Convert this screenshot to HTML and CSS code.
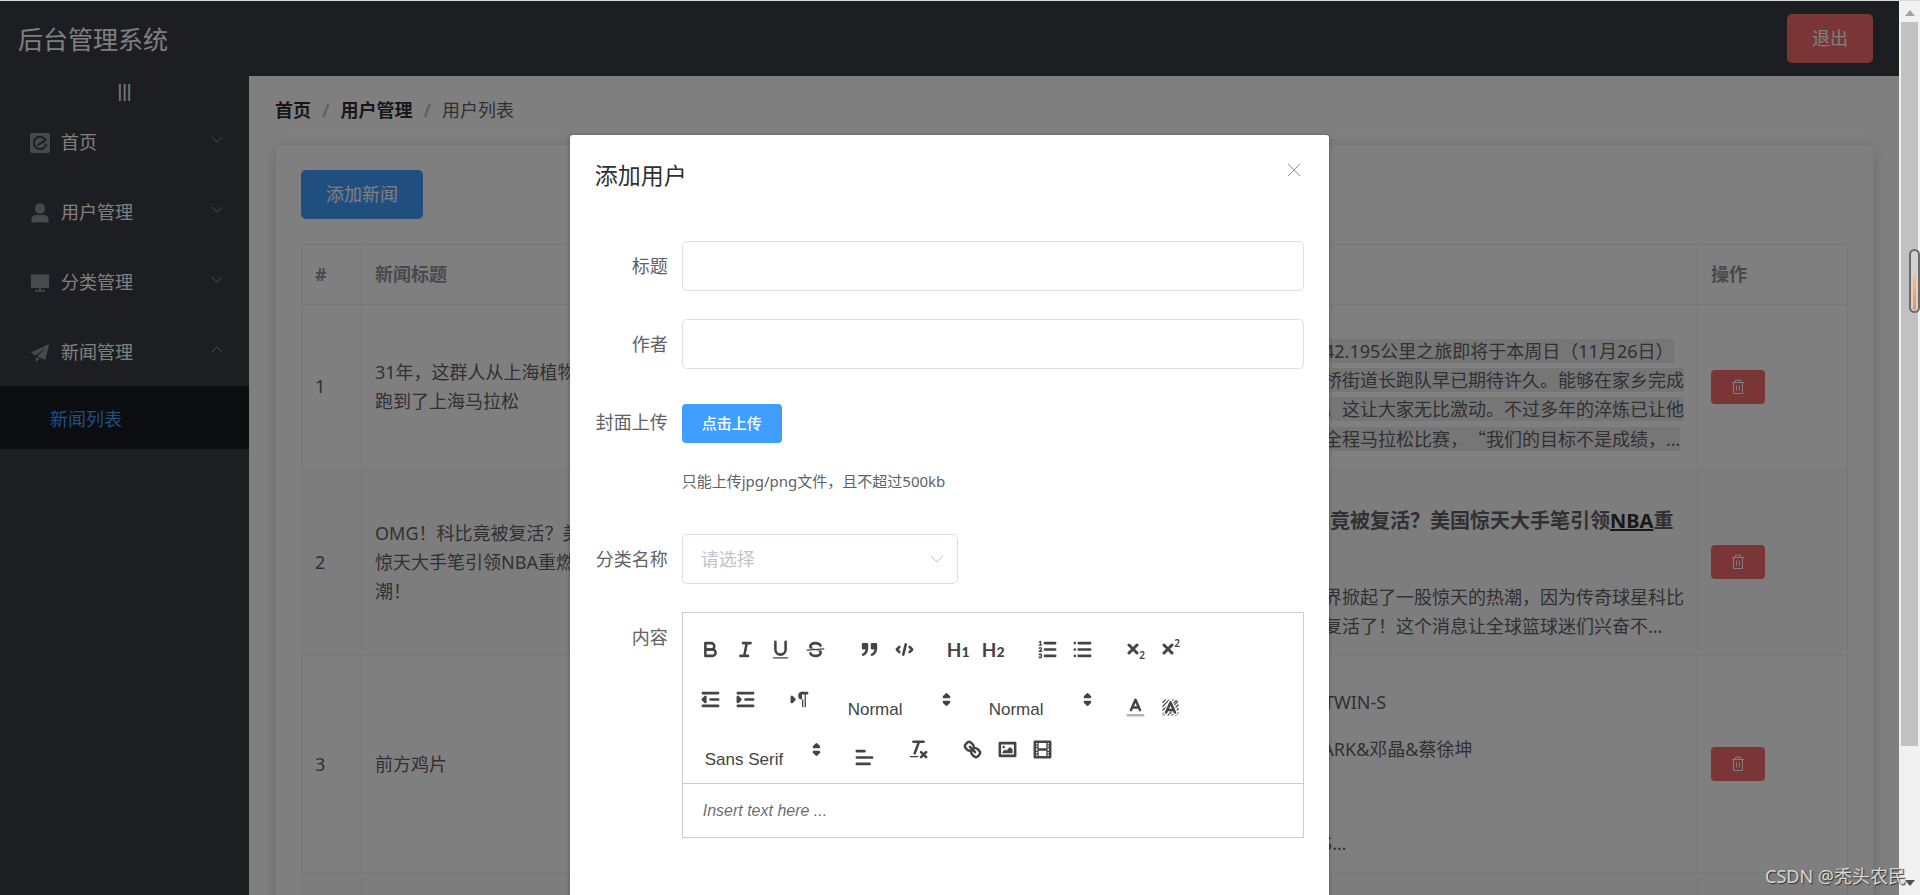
FILE: index.html
```html
<!DOCTYPE html>
<html lang="zh-CN">
<head>
<meta charset="utf-8">
<title>后台管理系统</title>
<link rel="stylesheet" href="styles.css">
</head>
<body>
<div class="window">
  <div class="app">
    <header class="header">
      <div class="brand">后台管理系统</div>
      <button class="btn btn-danger" type="button">退出</button>
    </header>
    <div class="body">
      <nav class="aside">
        <button class="toggle" type="button">|||</button>
        <ul class="menu">
          <li><a class="menu-item" href="#">
            <svg class="menu-icon" viewBox="0 0 20 20"><rect x="0" y="0" width="20" height="20" rx="2" fill="currentColor"/><path d="M14.5 14.2A6.2 6.2 0 1 1 15.6 7.2L8 12" fill="none" stroke="#393c44" stroke-width="2" stroke-linejoin="round" stroke-linecap="round"/><path d="M15.4 11.2l1 1.6" stroke="#393c44" stroke-width="2" stroke-linecap="round"/></svg>
            <span>首页</span>
            <svg class="chev" viewBox="0 0 12 7"><path d="M1 1l5 5 5-5"/></svg></a></li>
          <li><a class="menu-item" href="#">
            <svg class="menu-icon" viewBox="0 0 20 20"><ellipse cx="10" cy="5.5" rx="5" ry="5.3" fill="currentColor"/><path d="M1.500 19.500v-3a4.500 4.500 0 0 1 4.500-4.500h8a4.500 4.500 0 0 1 4.500 4.500v3z" fill="currentColor"/></svg>
            <span>用户管理</span>
            <svg class="chev" viewBox="0 0 12 7"><path d="M1 1l5 5 5-5"/></svg></a></li>
          <li><a class="menu-item" href="#">
            <svg class="menu-icon" viewBox="0 0 20 20"><path d="M1 1.500h18v13.500H1zM9 15h2v2.200h4v1.600H5v-1.600h4z" fill="currentColor"/></svg>
            <span>分类管理</span>
            <svg class="chev" viewBox="0 0 12 7"><path d="M1 1l5 5 5-5"/></svg></a></li>
          <li><a class="menu-item" href="#">
            <svg class="menu-icon" viewBox="0 0 20 20"><path d="M19 1L.8 9.600l4.600 2.800L15.500 5 7.200 13.600l8.300 3.400zM6 14.300v5l3.300-3.600z" fill="currentColor"/></svg>
            <span>新闻管理</span>
            <svg class="chev" viewBox="0 0 12 7"><path d="M1 6l5-5 5 5"/></svg></a>
            <a class="submenu-item" href="#">新闻列表</a></li>
        </ul>
      </nav>
      <main class="main">
        <div class="crumbs"><a href="#">首页</a><i>/</i><a href="#">用户管理</a><i>/</i><span>用户列表</span></div>
        <section class="card">
          <button class="btn btn-primary" type="button">添加新闻</button>
          <table class="table">
            <colgroup><col class="c-index"><col class="c-title"><col><col class="c-content"><col class="c-action"></colgroup>
            <thead><tr><th>#</th><th>新闻标题</th><th></th><th></th><th>操作</th></tr></thead>
            <tbody>
              <tr>
                <td>1</td>
                <td class="nowrap">31年，这群人从上海植物园<br>跑到了上海马拉松</td>
                <td></td>
                <td class="nowrap"><p class="para"><span class="mark">上马的42.195公里之旅即将于本周日（11月26日）</span><br><span class="mark">徐汇长桥街道长跑队早已期待许久。能够在家乡完成</span><br><span class="mark">拉松赛，这让大家无比激动。不过多年的淬炼已让他</span><br><span class="mark">们坚持全程马拉松比赛，<span class="cjk">“</span>我们的目标不是成绩，…</span></p></td>
                <td><button class="btn-del" type="button" aria-label="删除"><svg viewBox="0 0 14 16"><path d="M1 3.500h12M4.500 3V1.200h5V3M2.500 3.500v11h9v-11M5.500 6.500v5M8.500 6.500v5"/></svg></button></td>
              </tr>
              <tr class="striped">
                <td>2</td>
                <td class="nowrap">OMG！科比竟被复活？美国<br>惊天大手笔引领NBA重燃热<br>潮！</td>
                <td></td>
                <td class="nowrap"><h3 class="lead">！科比竟被复活？美国惊天大手笔引领<a href="#">NBA</a>重</h3><p class="flush">在篮球界掀起了一股惊天的热潮，因为传奇球星科比<br>竟然被复活了！这个消息让全球篮球迷们兴奋不…</p></td>
                <td><button class="btn-del" type="button" aria-label="删除"><svg viewBox="0 0 14 16"><path d="M1 3.500h12M4.500 3V1.200h5V3M2.500 3.500v11h9v-11M5.500 6.500v5M8.500 6.500v5"/></svg></button></td>
              </tr>
              <tr>
                <td>3</td>
                <td class="nowrap">前方鸡片</td>
                <td></td>
                <td class="nowrap"><p class="para">作曲：TWIN-S</p><p class="para">词：MARK&amp;邓晶&amp;蔡徐坤</p><p class="para">&nbsp;</p><p class="para">TWIN-S…</p></td>
                <td><button class="btn-del" type="button" aria-label="删除"><svg viewBox="0 0 14 16"><path d="M1 3.500h12M4.500 3V1.200h5V3M2.500 3.500v11h9v-11M5.500 6.500v5M8.500 6.500v5"/></svg></button></td>
              </tr>
              <tr class="striped"><td>&nbsp;</td><td></td><td></td><td></td><td></td></tr>
            </tbody>
          </table>
        </section>
      </main>
    </div>
    <div class="overlay">
      <div class="dialog" role="dialog" aria-labelledby="dlg-title">
        <div class="dialog-head">
          <h2 id="dlg-title">添加用户</h2>
          <button class="close" type="button" aria-label="关闭"><svg viewBox="0 0 14 14"><path d="M1 1l12 12M13 1L1 13"/></svg></button>
        </div>
        <form class="form">
          <div class="row"><label for="f-title">标题</label><input class="input" id="f-title" type="text"></div>
          <div class="row"><label for="f-author">作者</label><input class="input" id="f-author" type="text"></div>
          <div class="row"><label for="f-upload">封面上传</label>
            <div class="upload"><button class="btn-small" id="f-upload" type="button">点击上传</button><p>只能上传jpg/png文件，且不超过500kb</p></div></div>
          <div class="row"><label for="f-cat">分类名称</label>
            <div class="select"><select id="f-cat"><option>请选择</option></select><svg viewBox="0 0 14 8"><path d="M1 1l6 6 6-6"/></svg></div></div>
          <div class="row"><label for="f-body">内容</label>
            <div class="editor">
              <div class="toolbar">
                <span class="group">
                  <button type="button" aria-label="粗体"><svg viewBox="0 0 18 18"><path d="M5,4H9.500A2.500,2.500,0,0,1,12,6.500A2.500,2.500,0,0,1,9.500,9H5V4Z"/><path d="M5,9h5.500A2.500,2.500,0,0,1,13,11.500A2.500,2.500,0,0,1,10.500,14H5V9Z"/></svg></button>
                  <button type="button" aria-label="斜体"><svg viewBox="0 0 18 18"><path d="M7 4H13M5 14H11M8 14L10 4"/></svg></button>
                  <button type="button" aria-label="下划线"><svg viewBox="0 0 18 18"><path d="M5,3V9a4,4,0,0,0,8,0V3"/><rect class="fill" x="3" y="15" width="12" height="1" rx=".5"/></svg></button>
                  <button type="button" aria-label="删除线"><svg viewBox="0 0 18 18"><path class="thin" d="M15.500 8.500L2.500 9.500"/><path class="fill" d="M9.007,8C6.542,7.791,6,7.519,6,6.500,6,5.792,7.283,5,9,5c1.571,0,2.765.679,2.969,1.309a1,1,0,0,0,1.900-.617C13.356,4.106,11.354,3,9,3,6.200,3,4,4.538,4,6.500a3.200,3.200,0,0,0,.5,1.843Z"/><path class="fill" d="M8.984,10C11.457,10.208,12,10.479,12,11.500c0,0.708-1.283,1.500-3,1.500-1.571,0-2.765-.679-2.969-1.309a1,1,0,1,0-1.900.617C4.644,13.894,6.646,15,9,15c2.800,0,5-1.538,5-3.500a3.200,3.200,0,0,0-.5-1.843Z"/></svg></button>
                </span>
                <span class="group">
                  <button type="button" aria-label="引用"><svg viewBox="0 0 18 18"><g class="both"><rect x="4" y="5" width="3" height="3"/><rect x="11" y="5" width="3" height="3"/><path d="M7,8c0,4.031-3,5-3,5"/><path d="M14,8c0,4.031-3,5-3,5"/></g></svg></button>
                  <button type="button" aria-label="代码"><svg viewBox="0 0 18 18"><path d="M5 7L3 9L5 11M13 7L15 9L13 11M10 5L8 13"/></svg></button>
                </span>
                <span class="group">
                  <button class="heading" type="button">H<small>1</small></button>
                  <button class="heading" type="button">H<small>2</small></button>
                </span>
                <span class="group">
                  <button type="button" aria-label="有序列表"><svg viewBox="0 0 18 18"><path d="M7 4H15M7 9H15M7 14H15"/><path class="thin" d="M2.500 5.500H4.500M2.600 3.100L3.500 2.600V5.500M4.500,10.500h-2c0-.234,1.850-1.076,1.850-2.234A0.959,0.959,0,0,0,2.500,8.156M2.500,14.846a0.959,0.959,0,0,0,1.850-.109A0.700,0.700,0,0,0,3.750,14a0.688,0.688,0,0,0,.6-0.736,0.959,0.959,0,0,0-1.850-.109"/></svg></button>
                  <button type="button" aria-label="无序列表"><svg viewBox="0 0 18 18"><path d="M6 4H15M6 9H15M6 14H15M3 4V4M3 9V9M3 14V14"/></svg></button>
                </span>
                <span class="group">
                  <button class="script" type="button"><svg viewBox="0 0 12 12"><path d="M2 2L10 10M10 2L2 10"/></svg><small class="low">2</small></button>
                  <button class="script" type="button"><svg viewBox="0 0 12 12"><path d="M2 2L10 10M10 2L2 10"/></svg><small class="high">2</small></button>
                </span>
                <span class="group">
                  <button type="button" aria-label="减少缩进"><svg viewBox="0 0 18 18"><path d="M3 14H15M3 4H15M9 9H15"/><path class="both" d="M5 7V11L3 9Z"/></svg></button>
                  <button type="button" aria-label="增加缩进"><svg viewBox="0 0 18 18"><path d="M3 14H15M3 4H15M9 9H15"/><path class="both" d="M3 7V11L5 9Z"/></svg></button>
                </span>
                <span class="group">
                  <button type="button" aria-label="文字方向"><svg viewBox="0 0 18 18"><path class="both" d="M3 11L5 9L3 7Z"/><path d="M15 4H11"/><path class="fill" d="M11,3a3,3,0,0,0,0,6h1V3H11ZM11 4h1v11h-1zM13 4h1v11h-1z"/></svg></button>
                </span>
                <span class="group picker"><select aria-label="字号"><option>Normal</option></select><svg viewBox="0 0 18 18"><path class="both" d="M7 11L9 13L11 11ZM7 7L9 5L11 7Z"/></svg></span>
                <span class="group picker"><select aria-label="标题"><option>Normal</option></select><svg viewBox="0 0 18 18"><path class="both" d="M7 11L9 13L11 11ZM7 7L9 5L11 7Z"/></svg></span>
                <span class="group lower">
                  <button type="button" aria-label="文字颜色"><svg viewBox="0 0 18 18"><path opacity=".4" d="M3 15H15"/><path d="M5.500 11L9 3L12.500 11M11.600 9H6.400"/></svg></button>
                  <button type="button" aria-label="背景颜色"><svg viewBox="0 0 18 18"><path class="thin" stroke-dasharray="2 .6" d="M3 5L5 3M3 8L8 3M3 11L11 3M3 14L14 3M4 15L15 4M7 15L15 7M10 15L15 10M13 15L15 13"/><path class="halo" d="M5.500 13L9 5L12.500 13"/><path d="M5.500 13L9 5L12.500 13M11.600 11H6.400"/></svg></button>
                </span>
                <span class="group picker wide"><select aria-label="字体"><option>Sans Serif</option></select><svg viewBox="0 0 18 18"><path class="both" d="M7 11L9 13L11 11ZM7 7L9 5L11 7Z"/></svg></span>
                <span class="group lower">
                  <button type="button" aria-label="对齐"><svg viewBox="0 0 18 18"><path d="M3 9H15M3 14H13M3 4H9"/></svg></button>
                </span>
                <span class="group">
                  <button type="button" aria-label="清除格式"><svg viewBox="0 0 18 18"><path d="M5 3H13M6 12L9.350 3M11 11L15 15M15 11L11 15"/><rect class="fill" x="2" y="14" width="7" height="1" rx=".5"/></svg></button>
                </span>
                <span class="group">
                  <button type="button" aria-label="链接"><svg viewBox="0 0 18 18"><path d="M7 7L11 11M8.900,4.577a3.476,3.476,0,0,1,.36,4.679A3.476,3.476,0,0,1,4.577,8.900C3.185,7.500,2.035,6.400,4.217,4.217S7.500,3.185,8.900,4.577ZM13.423,9.100a3.476,3.476,0,0,0-4.679-.36,3.476,3.476,0,0,0,.36,4.679c1.392,1.392,2.500,2.542,4.679.36S14.815,10.500,13.423,9.100Z"/></svg></button>
                  <button type="button" aria-label="图片"><svg viewBox="0 0 18 18"><rect x="3" y="4" width="12" height="10"/><circle class="fill" cx="6" cy="7" r="1"/><path class="fill" d="M5 12V11L7 9L8 10L11 7L13 9V12Z"/></svg></button>
                  <button type="button" aria-label="视频"><svg viewBox="0 0 18 18"><rect x="3" y="3" width="12" height="12"/><path class="fill" d="M5 3h1v12h-1zM12 3h1v12h-1zM5 8h8v2h-8zM3 5h3v1h-3zM3 7h3v1h-3zM3 10h3v1h-3zM3 12h3v1h-3zM12 5h3v1h-3zM12 7h3v1h-3zM12 10h3v1h-3zM12 12h3v1h-3z"/></svg></button>
                </span>
              </div>
              <textarea id="f-body" rows="1" placeholder="Insert text here ..."></textarea>
            </div></div>
        </form>
      </div>
    </div>
  </div>
  <div class="scrollbar">
    <svg class="sb-up" viewBox="0 0 10 6"><path d="M0 6L5 0L10 6Z"/></svg>
    <div class="track"><div class="thumb"></div></div>
    <svg class="sb-down" viewBox="0 0 10 6"><path d="M0 0L5 6L10 0Z"/></svg>
    <div class="gauge"><div class="gauge-fill"></div></div>
  </div>
  <div class="watermark">CSDN @秃头农民</div>
</div>
</body>
</html>
```
FILE: styles.css
```css
* { box-sizing: border-box; }
body, h2, h3, p, ul { margin: 0; padding: 0; }
body {
  font: 18px/29px "Noto Sans", "Noto Sans CJK SC", sans-serif;
  color: #606266;
  overflow: hidden;
  text-spacing-trim: space-all;
}
button, input, select, textarea { font: inherit; margin: 0; }
button { border: 0; padding: 0; background: none; cursor: pointer; }
a { color: inherit; text-decoration: none; }
svg { display: block; }

.window {
  position: relative;
  display: grid;
  grid-template-columns: minmax(0, 1fr) 21px;
  height: 100vh;
  border-top: 1px solid #d9dcdc;
}
.app { position: relative; display: flex; flex-direction: column; overflow: hidden; min-height: 0; }

.header {
  flex: none;
  display: flex;
  align-items: center;
  justify-content: space-between;
  height: 75px;
  padding: 0 26px 0 18px;
  background: #393c44;
}
.brand { padding-top: 2px; font-size: 25px; color: #fff; }
.btn { height: 49px; padding: 0 25px; border-radius: 5px; color: #fff; line-height: 49px; }
.btn-danger { background: #f56c6c; }
.btn-primary { background: #409eff; }

.body { flex: 1; display: flex; min-height: 0; }
.aside { flex: none; width: 249px; background: #393c44; color: #fff; }
.toggle { display: block; width: 100%; height: 30px; font: 18px/30px "Liberation Sans", sans-serif; color: #fff; text-align: center; }
.menu { list-style: none; }
.menu-item { display: flex; align-items: center; height: 70px; padding: 3px 26px 0 30px; }
.menu-icon { width: 20px; height: 20px; margin-right: 11px; color: #909399; }
.chev { width: 12px; height: 7px; margin: 0 0 7px auto; fill: none; stroke: #909399; stroke-width: 1; }
.submenu-item { display: block; height: 63px; padding: 3px 0 0 50px; line-height: 60px; background: #181a20; color: #409eff; }

.main { flex: 1; min-width: 0; padding: 20px 25px 0 26px; background: #fff; overflow: hidden; }
.crumbs { display: flex; height: 29px; }
.crumbs a { font-weight: 700; color: #303133; }
.crumbs i { margin: 0 11px; font-style: normal; font-weight: 700; color: #c0c4cc; }
.card {
  margin-top: 19px;
  padding: 25px;
  border: 1px solid #ebeef5;
  border-radius: 5px;
  box-shadow: 0 2px 15px rgba(0, 0, 0, .15);
}
.table {
  width: 100%;
  margin-top: 25px;
  table-layout: fixed;
  border-collapse: collapse;
}
.c-index { width: 60px; }
.c-title { width: 250px; }
.c-content { width: 441px; }
.c-action { width: 150px; }
.table th, .table td { padding: 14px 13px; border: 1px solid #ebeef5; text-align: left; vertical-align: middle; }
.table th { height: 60px; color: #909399; }
.striped { background: #fafafa; }
.nowrap { white-space: nowrap; }
.para { padding-top: 18px; }
.para .mark { background: #ededed; }
.cjk { font-family: "Noto Sans CJK SC", sans-serif; }
.lead { padding: 21px 0 46px; font-size: 20px; line-height: 33px; }
.lead a { color: #303133; text-decoration: underline; }
.btn-del { display: flex; align-items: center; justify-content: center; width: 54px; height: 34px; border-radius: 4px; background: #f56c6c; }
.btn-del svg { width: 14px; height: 16px; fill: none; stroke: #fff; stroke-width: 1; }

.overlay { position: absolute; inset: 0; overflow: hidden; background: rgba(0, 0, 0, .5); }
.dialog {
  width: 40%;
  min-height: 100%;
  margin: 15vh auto 0;
  border-radius: 3px;
  background: #fff;
  box-shadow: 0 1px 4px rgba(0, 0, 0, .3);
}
.dialog-head { display: flex; justify-content: space-between; padding: 25px 28px 0 25px; }
.dialog-head h2 { font-size: 23px; font-weight: 400; line-height: 31px; color: #303133; }
.close { align-self: flex-start; padding-top: 3px; }
.close svg { width: 14px; height: 14px; fill: none; stroke: #909399; stroke-width: 1; }
.form { display: flex; flex-direction: column; gap: 28px; padding: 50px 25px 0; }
.row { display: flex; }
.row > label { flex: none; width: 87px; padding-right: 14px; line-height: 50px; text-align: right; white-space: nowrap; }
.input { flex: 1; min-width: 0; height: 50px; padding: 0 18px; border: 1px solid #dcdfe6; border-radius: 5px; }
.upload { padding-top: 7px; }
.btn-small { display: block; height: 39px; padding: 0 20px; border-radius: 4px; background: #409eff; color: #fff; font-size: 15px; font-weight: 500; line-height: 39px; }
.upload p { padding-top: 13px; font-size: 15px; line-height: 50px; }
.select { position: relative; width: 276px; }
.select select { display: block; width: 100%; height: 50px; padding: 0 18px; border: 1px solid #dcdfe6; border-radius: 5px; background: #fff; color: #c0c4cc; appearance: none; }
.select svg { position: absolute; right: 14px; top: 21px; width: 14px; height: 8px; fill: none; stroke: #c0c4cc; stroke-width: 1; pointer-events: none; }

.editor { flex: 1; min-width: 0; border: 1px solid #ccc; }
.toolbar { display: flex; flex-wrap: wrap; padding: 11px 10px 9px; border-bottom: 1px solid #ccc; color: #444; }
.group { display: flex; align-items: center; height: 50px; margin-right: 19px; }
.group button { display: flex; justify-content: center; width: 35px; color: #444; }
.toolbar svg { width: 23px; height: 23px; fill: none; stroke: #444; stroke-width: 2; stroke-linecap: round; stroke-linejoin: round; }
.toolbar .thin { stroke-width: 1; }
.toolbar .fill { fill: #444; stroke: none; }
.toolbar .both { fill: #444; }
.toolbar .halo { stroke: #fff; stroke-width: 4; }
.lower { padding-top: 16px; }
.group .heading { align-items: baseline; font: 700 19px/23px Lato, sans-serif; }
.heading small { font: 900 14px/14px Lato, sans-serif; }
.group .script { align-items: center; height: 23px; }
.toolbar .script svg { width: 12px; height: 12px; stroke-width: 3; }
.script small { font: 600 10px/11px "Noto Sans", sans-serif; }
.script .low { align-self: flex-end; }
.script .high { align-self: flex-start; }
.picker { position: relative; width: 122px; }
.picker.wide { width: 135px; }
.picker select { width: 100%; height: 50px; padding: 22px 0 0 12px; border: 0; background: none; color: #444; font: 17px/28px "Liberation Sans", sans-serif; appearance: none; }
.picker svg { position: absolute; right: 0; top: 14px; pointer-events: none; }
.editor textarea {
  display: block;
  width: 100%;
  height: 53px;
  padding: 15px 20px;
  border: 0;
  resize: none;
  overflow: hidden;
  font: 16px/23px "Liberation Sans", sans-serif;
}
.editor textarea::placeholder { font-style: italic; color: rgba(0, 0, 0, .6); }

.scrollbar { position: relative; display: flex; flex-direction: column; align-items: center; padding: 9px 0; background: #f1f1f1; }
.scrollbar svg { flex: none; width: 10px; height: 6px; }
.sb-up { fill: #a3a3a3; }
.sb-down { fill: #505050; }
.track { flex: 1; width: 17px; padding: 6px 0; }
.thumb { height: 85%; background: #c1c1c1; }
.gauge { position: absolute; right: 0; top: 248px; display: flex; align-items: flex-end; width: 11px; height: 64px; padding: 1px 2px; border: 2px solid #6b6b6b; border-radius: 6px; background: #d3d3d3; }
.gauge-fill { width: 100%; height: 62%; border-radius: 2px; background: linear-gradient(#ffc080, #ff8a3c); }
.watermark { position: absolute; right: 14px; bottom: 4px; color: #d6d6d6; font-size: 18px; text-shadow: 1px 1px 1px #333; }
```
